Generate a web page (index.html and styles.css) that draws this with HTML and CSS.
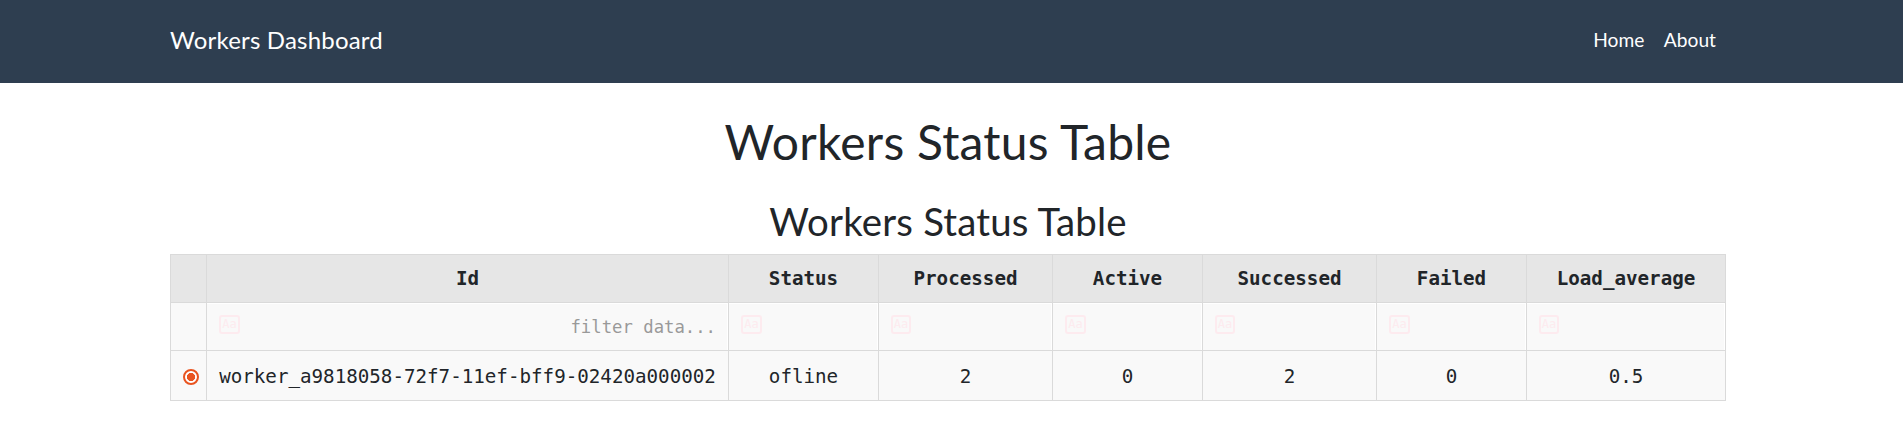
FILE: index.html
```html
<!DOCTYPE html>
<html lang="en">
<head>
<meta charset="utf-8">
<title>Workers Dashboard</title>
<link rel="stylesheet" href="styles.css">
</head>
<body>
<header class="navbar">
  <div class="navbar-inner">
    <a class="brand">Workers Dashboard</a>
    <nav class="links"><a>Home</a><a>About</a></nav>
  </div>
</header>
<main class="container">
  <h1 class="title">Workers Status Table</h1>
  <h2 class="subtitle">Workers Status Table</h2>
  <div class="table">
    <div class="cell head"></div>
    <div class="cell head">Id</div>
    <div class="cell head">Status</div>
    <div class="cell head">Processed</div>
    <div class="cell head">Active</div>
    <div class="cell head">Successed</div>
    <div class="cell head">Failed</div>
    <div class="cell head">Load_average</div>

    <div class="cell"></div>
    <div class="cell filter"><span class="case">Aa</span><span class="placeholder">filter data...</span></div>
    <div class="cell filter"><span class="case">Aa</span></div>
    <div class="cell filter"><span class="case narrow">Aa</span></div>
    <div class="cell filter"><span class="case">Aa</span></div>
    <div class="cell filter"><span class="case narrow">Aa</span></div>
    <div class="cell filter"><span class="case">Aa</span></div>
    <div class="cell filter"><span class="case narrow">Aa</span></div>

    <div class="cell select"><span class="radio"></span></div>
    <div class="cell data">worker_a9818058-72f7-11ef-bff9-02420a000002</div>
    <div class="cell data">ofline</div>
    <div class="cell data">2</div>
    <div class="cell data">0</div>
    <div class="cell data">2</div>
    <div class="cell data">0</div>
    <div class="cell data">0.5</div>
  </div>
</main>
</body>
</html>
```
FILE: styles.css
```css
* { box-sizing: border-box; }
body {
  margin: 0;
  background: #fff;
  color: #212529;
  font-family: Lato, sans-serif;
  font-size: 19.2px;
  line-height: 1.5;
}
.navbar { height: 83px; background: #2e3e50; color: #fff; }
.navbar-inner {
  width: 1556px;
  height: 81px;
  margin-left: 170px;
  padding-right: 10px;
  display: flex;
  align-items: center;
  justify-content: space-between;
}
.brand { font-size: 24px; letter-spacing: 0.2px; padding-bottom: 2px; }
.links { display: flex; gap: 19.5px; }
.container { width: 1556px; margin-left: 170px; }
.title, .subtitle { margin: 0; font-weight: 400; line-height: 1.2; text-align: center; }
.title { font-size: 48px; padding-top: 30px; letter-spacing: 0.24px; }
.subtitle { font-size: 38.4px; padding-top: 27px; height: 83px; letter-spacing: 0.19px; }
.table {
  display: grid;
  grid-template-columns: 35px 521px 149px 173px 149px 173px 149px 198px;
  grid-template-rows: 47px 47px 49px;
  gap: 1px;
  padding: 1px;
  background: #dadada;
  font-family: "DejaVu Sans Mono", monospace;
}
.cell {
  display: flex;
  align-items: center;
  justify-content: center;
  background: #f9f9f9;
  white-space: nowrap;
}
.head { background: #e6e6e6; font-weight: 700; padding-top: 2px; }
.data { padding-top: 5px; }
.filter {
  justify-content: space-between;
  align-items: flex-start;
  padding: 11px 11px 0 12px;
  border: solid #fff;
  border-width: 1px 1px 0 0;
}
.case {
  width: 21px;
  height: 19px;
  border: 2px solid #fdebef;
  border-radius: 3px;
  color: #fdebef;
  font-size: 12px;
  line-height: 15px;
  text-align: center;
}
.narrow { width: 20px; }
.placeholder { color: #999; font-size: 17.28px; line-height: 24px; }
.radio {
  width: 16px;
  height: 16px;
  margin-left: 5px;
  margin-top: 3px;
  border: 2px solid #e95420;
  border-radius: 50%;
  background: radial-gradient(circle, #e95420 3.8px, #fff 4.4px);
}
```
